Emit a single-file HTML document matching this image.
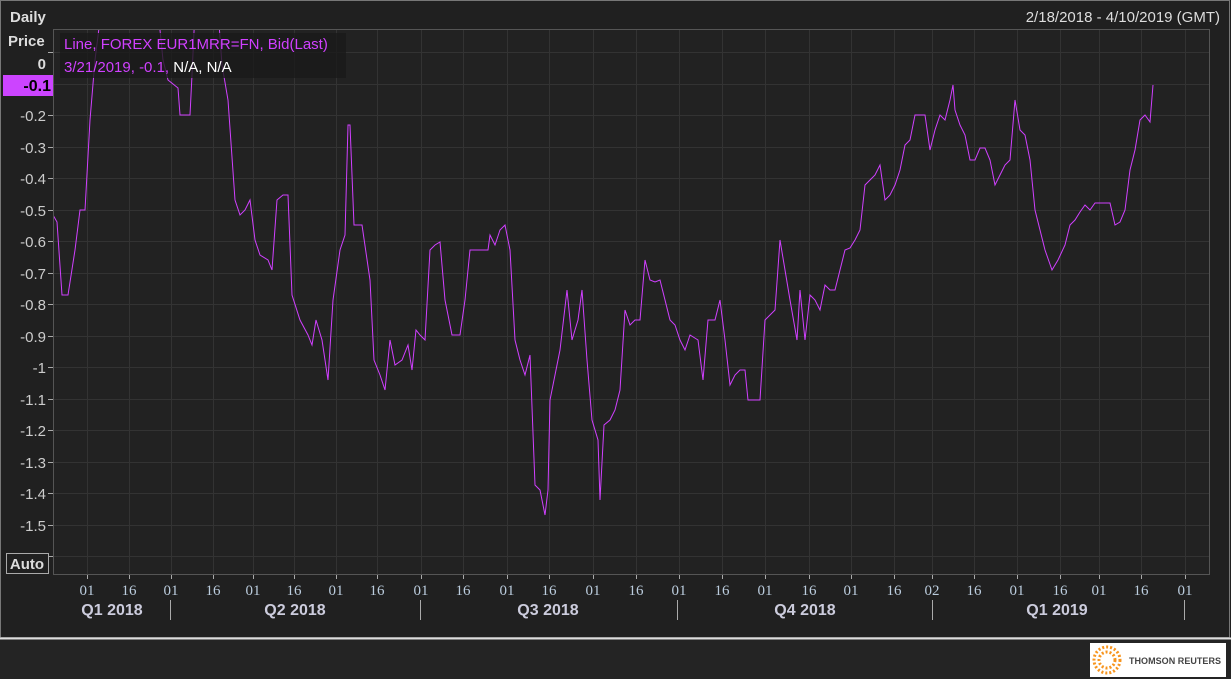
<!DOCTYPE html>
<html><head><meta charset="utf-8"><style>
body{margin:0;width:1231px;height:679px;background:#242424;overflow:hidden;font-family:"Liberation Sans",Tahoma,sans-serif;}
</style></head><body>
<svg width="1231" height="679" xmlns="http://www.w3.org/2000/svg" style="position:absolute;left:0;top:0">
<defs><clipPath id="c"><rect x="54" y="30" width="1155" height="544"/></clipPath></defs>
<rect x="0" y="0" width="1231" height="638" fill="#202020"/>
<rect x="0.5" y="0.5" width="1229" height="637" fill="none" stroke="#777"/>
<line x1="0" y1="638.5" x2="1231" y2="638.5" stroke="#ddd" stroke-width="2"/>
<rect x="53.5" y="29.5" width="1156" height="545" fill="#222" stroke="#555"/>
<g stroke="#333" stroke-width="1">
<path d="M87.5 30V574M129.5 30V574M171.5 30V574M213.5 30V574M253.5 30V574M294.5 30V574M336.5 30V574M377.5 30V574M421.5 30V574M463.5 30V574M507.5 30V574M549.5 30V574M593.5 30V574M636.5 30V574M679.5 30V574M722.5 30V574M765.5 30V574M809.5 30V574M851.5 30V574M894.5 30V574M932.5 30V574M974.5 30V574M1017.5 30V574M1060.5 30V574M1099.5 30V574M1141.5 30V574M1185.5 30V574"/>
<path d="M54 52.5H1209M54 84.5H1209M54 115.5H1209M54 147.5H1209M54 178.5H1209M54 210.5H1209M54 241.5H1209M54 273.5H1209M54 304.5H1209M54 336.5H1209M54 367.5H1209M54 399.5H1209M54 430.5H1209M54 462.5H1209M54 493.5H1209M54 525.5H1209M54 556.5H1209"/>
</g>
<g stroke="#aaa"><path d="M48 52.5H53M48 84.5H53M48 115.5H53M48 147.5H53M48 178.5H53M48 210.5H53M48 241.5H53M48 273.5H53M48 304.5H53M48 336.5H53M48 367.5H53M48 399.5H53M48 430.5H53M48 462.5H53M48 493.5H53M48 525.5H53M48 556.5H53"/>
<path d="M87.5 575v4M129.5 575v4M171.5 575v4M213.5 575v4M253.5 575v4M294.5 575v4M336.5 575v4M377.5 575v4M421.5 575v4M463.5 575v4M507.5 575v4M549.5 575v4M593.5 575v4M636.5 575v4M679.5 575v4M722.5 575v4M765.5 575v4M809.5 575v4M851.5 575v4M894.5 575v4M932.5 575v4M974.5 575v4M1017.5 575v4M1060.5 575v4M1099.5 575v4M1141.5 575v4M1185.5 575v4"/>
<path d="M170.5 600v20M420.5 600v20M677.5 600v20M932.5 600v20M1184.5 600v20"/></g>
<polyline clip-path="url(#c)" fill="none" stroke="#d040ff" stroke-width="1" points="53,215 57,222 62,295 68,295 75,250 80,210 85,210 90,120 95,60 100,20 102,10 158,10 163,60 168,80 178,88 180,115 190,115 192,75 195,10 218,10 222,65 228,100 235,200 240,215 245,210 250,200 255,240 260,255 268,260 272,270 277,200 283,195 288,195 292,295 300,320 308,335 312,345 316,320 322,340 328,380 333,300 340,250 345,235 348,125 350,125 354,225 362,225 370,280 374,360 380,375 385,390 390,340 395,365 402,360 408,345 412,370 416,330 420,335 425,340 430,250 435,245 440,242 445,300 452,335 460,335 465,300 470,250 475,250 488,250 490,235 495,245 500,230 505,225 510,250 515,340 520,360 525,375 530,355 535,485 540,490 545,515 548,490 550,400 560,350 567,290 572,340 578,320 582,290 587,360 592,420 598,440 600,500 604,425 610,420 615,410 620,390 625,310 630,325 635,320 640,320 645,260 650,280 655,282 660,280 665,300 670,320 675,325 680,340 685,350 690,335 698,340 703,380 708,320 715,320 720,300 725,340 730,385 735,375 740,370 745,370 748,400 760,400 765,320 770,315 775,310 780,240 785,270 790,300 797,340 800,290 805,340 810,295 815,300 820,310 825,285 830,290 835,290 840,270 845,250 850,248 855,240 860,230 865,185 870,180 875,175 880,165 885,200 890,195 895,185 900,170 905,145 910,140 915,115 920,115 925,115 930,150 935,130 940,115 945,120 950,100 953,85 955,110 960,125 965,135 970,160 975,160 980,148 985,148 990,160 995,185 1000,175 1005,165 1010,160 1015,100 1020,130 1025,135 1030,160 1035,210 1040,230 1045,250 1052,270 1058,260 1065,245 1070,225 1075,220 1080,212 1085,205 1090,210 1095,203 1110,203 1115,225 1120,222 1125,210 1130,170 1135,150 1140,120 1145,115 1150,122 1153,85"/>
<rect x="60" y="33" width="286" height="45" fill="#1a1a1a" opacity="0.8"/>
<g font-size="15" font-family="Liberation Sans,Tahoma,sans-serif">
<text x="64" y="49" fill="#d040ff">Line, FOREX EUR1MRR=FN, Bid(Last)</text>
<text x="64" y="72" fill="#d040ff">3/21/2019, -0.1, <tspan fill="#fff">N/A, N/A</tspan></text>
</g>
<g font-weight="bold" fill="#ddd" font-size="15">
<text x="10" y="22">Daily</text>
<text x="8" y="46">Price</text>
<text x="46" y="69" text-anchor="end">0</text>
</g>
<text x="1220" y="22" fill="#ddd" font-size="15" text-anchor="end">2/18/2018 - 4/10/2019 (GMT)</text>
<rect x="3" y="75" width="50" height="21" fill="#cc44ff"/>
<text x="51" y="91" font-weight="bold" font-size="16" fill="#000" text-anchor="end">-0.1</text>
<g fill="#ccc" font-size="15" text-anchor="end">
<text x="46" y="121">-0.2</text><text x="46" y="153">-0.3</text><text x="46" y="184">-0.4</text><text x="46" y="216">-0.5</text><text x="46" y="247">-0.6</text><text x="46" y="279">-0.7</text><text x="46" y="310">-0.8</text><text x="46" y="342">-0.9</text><text x="46" y="373">-1</text><text x="46" y="405">-1.1</text><text x="46" y="436">-1.2</text><text x="46" y="468">-1.3</text><text x="46" y="499">-1.4</text><text x="46" y="531">-1.5</text>
</g>
<rect x="6.5" y="553.5" width="42" height="20" fill="none" stroke="#aaa"/>
<text x="27" y="569" font-weight="bold" fill="#ddd" font-size="15" text-anchor="middle">Auto</text>
<g fill="#bcd" font-size="15" text-anchor="middle" font-family="Liberation Serif,serif">
<text x="87" y="595">01</text><text x="129" y="595">16</text><text x="171" y="595">01</text><text x="213" y="595">16</text><text x="253" y="595">01</text><text x="294" y="595">16</text><text x="336" y="595">01</text><text x="377" y="595">16</text><text x="421" y="595">01</text><text x="463" y="595">16</text><text x="507" y="595">01</text><text x="549" y="595">16</text><text x="593" y="595">01</text><text x="636" y="595">16</text><text x="679" y="595">01</text><text x="722" y="595">16</text><text x="765" y="595">01</text><text x="809" y="595">16</text><text x="851" y="595">01</text><text x="894" y="595">16</text><text x="932" y="595">02</text><text x="974" y="595">16</text><text x="1017" y="595">01</text><text x="1060" y="595">16</text><text x="1099" y="595">01</text><text x="1141" y="595">16</text><text x="1185" y="595">01</text>
</g>
<g fill="#ccd" font-size="16" font-weight="bold" text-anchor="middle">
<text x="112" y="615">Q1 2018</text><text x="295" y="615">Q2 2018</text><text x="548" y="615">Q3 2018</text><text x="805" y="615">Q4 2018</text><text x="1057" y="615">Q1 2019</text>
</g>
<rect x="1090" y="643" width="136" height="34" fill="#fff"/>
<g fill="none" stroke="#f7941d" stroke-width="3" stroke-dasharray="2 2">
<circle cx="1107" cy="660" r="13"/><circle cx="1107" cy="660" r="8"/>
</g>
<circle cx="1107" cy="660" r="3" fill="#fff"/>
<text x="1129" y="664" font-size="9" font-weight="bold" fill="#444" textLength="92">THOMSON REUTERS</text>
</svg>
</body></html>
